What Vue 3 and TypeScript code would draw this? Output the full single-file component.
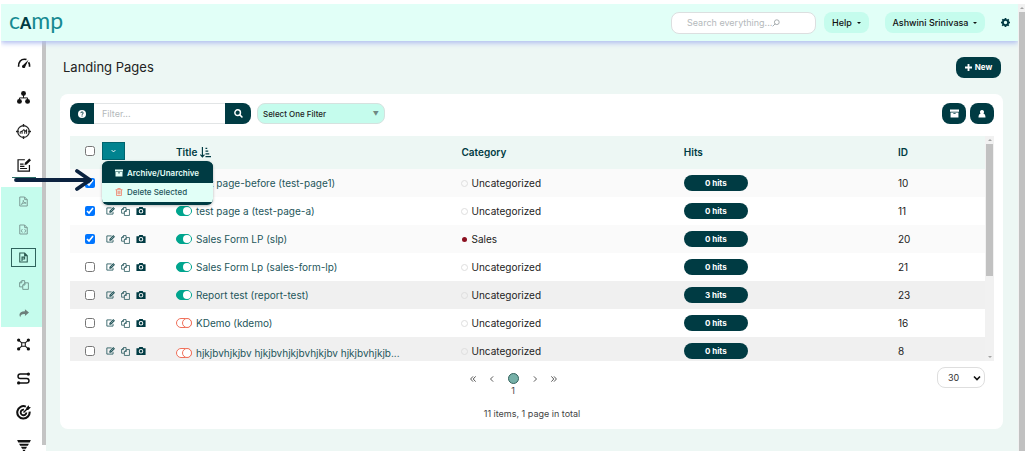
<script setup lang="ts">
import { ref } from 'vue'

interface Row {
  id: number
  title: string
  category: string
  hits: number
  enabled: boolean
  checked: boolean
}

const rows = ref<Row[]>([
  { id: 10, title: 'test page-before (test-page1)', category: 'Uncategorized', hits: 0, enabled: true, checked: true },
  { id: 11, title: 'test page a (test-page-a)', category: 'Uncategorized', hits: 0, enabled: true, checked: true },
  { id: 20, title: 'Sales Form LP (slp)', category: 'Sales', hits: 0, enabled: true, checked: true },
  { id: 21, title: 'Sales Form Lp (sales-form-lp)', category: 'Uncategorized', hits: 0, enabled: true, checked: false },
  { id: 23, title: 'Report test (report-test)', category: 'Uncategorized', hits: 3, enabled: true, checked: false },
  { id: 16, title: 'KDemo (kdemo)', category: 'Uncategorized', hits: 0, enabled: false, checked: false },
  { id: 8, title: 'hjkjbvhjkjbv hjkjbvhjkjbvhjkjbv hjkjbvhjkjb...', category: 'Uncategorized', hits: 0, enabled: false, checked: false },
])
</script>

<template>
  <div class="shell">
    <div class="app">
      <header class="topbar">
        <a class="brand" href="#" aria-label="cAmp"><span>c</span><b>A</b><span>mp</span></a>
        <label class="search">
          <input type="text" placeholder="Search everything..." aria-label="Search everything" />
          <svg viewBox="0 0 10 10" width="8" height="8"><g fill="none" stroke="#a3a9ab" stroke-width="1.200"><circle cx="6" cy="4" r="3" /><path d="M4 6 .8 9.200" /></g></svg>
        </label>
        <button class="chip help">Help <i class="caret"></i></button>
        <button class="chip user">Ashwini Srinivasa <i class="caret"></i></button>
        <button class="gear" aria-label="Settings">
          <svg viewBox="0 0 16 16" width="9" height="9"><path fill="#003b43" fill-rule="evenodd" d="M6.600 0h2.800l.4 2 1.300.6 1.800-1.200 1.900 2-1.200 1.700.6 1.300 1.800.3v2.700l-2 .4-.5 1.300 1.200 1.800-2 1.900-1.600-1.200-1.400.6-.3 1.800H6.600l-.4-2-1.300-.5-1.800 1.200-1.900-2 1.200-1.600-.6-1.400L0 9.400V6.600l2-.4.5-1.300L1.300 3.100l2-1.900L5 2.400l1.300-.5zM8 5a3 3 0 1 0 0 6 3 3 0 0 0 0-6z" /></svg>
        </button>
      </header>

      <div class="body">
        <nav class="sidebar" aria-label="Main">
          <a href="#" class="item" aria-label="Dashboard">
            <svg viewBox="0 0 16 12" width="14" height="10"><path fill="none" stroke="#111" stroke-width="2" d="M1.500 10.500C1 4 5 1.500 8.500 1.500c1 0 1.800.1 2.500.4M13.500 5c1 1.500 1.400 3.500 1.200 5.500" /><path fill="#111" d="M13.500 2 9.600 10.300a2 2 0 1 1-2.700-2z" /></svg>
          </a>
          <a href="#" class="item" aria-label="Structure">
            <svg viewBox="0 0 16 16" width="13" height="13"><g fill="#111"><circle cx="8" cy="3" r="3" /><circle cx="3" cy="12.800" r="3" /><circle cx="13" cy="12.800" r="3" /></g><path d="M8 5v3.500M3 11V8.500h10V11" fill="none" stroke="#111" stroke-width="1.200" /></svg>
          </a>
          <a href="#" class="item" aria-label="Audience">
            <svg viewBox="0 0 16 16" width="15" height="15"><g fill="none" stroke="#222"><circle cx="8" cy="8" r="6.200" stroke-width="1.300" /><path d="M8 0v3M8 13v3M0 8h3M13 8h3" stroke-width="1.500" /><path d="M4.500 10.500V8.500l2-1v3M6.500 8l1.800-2 1 1v3.500M9.300 8.500l2-2v4" stroke-width="1.100" /></g></svg>
          </a>
          <a href="#" class="item current" aria-label="Content">
            <svg viewBox="0 0 16 16" width="14" height="14"><g fill="none" stroke="#111" stroke-width="1.400"><path d="M9 2H1.200v13h13V8" /><path d="M3.500 7h4M3.500 9.500h5M3.500 12h8" /></g><path fill="#111" d="m8.500 8 .6-2.600L14 .6 16 2.500l-4.900 4.900z" /></svg>
          </a>
          <div class="submenu">
            <a href="#" class="sub" aria-label="Documents"><svg viewBox="0 0 12 14" width="9" height="11"><g fill="none" stroke="#7b9a94" stroke-width="1.300"><path d="M1 1h6.500L11 4.500V13H1zM7.500 1v3.500H11" /><path d="M3 11c2-2 3-4 2.700-5.500C6 8 7.500 9 9.500 9 7 8.800 5 9.500 3 11z" /></g></svg></a>
            <a href="#" class="sub" aria-label="Code pages"><svg viewBox="0 0 12 14" width="9" height="11"><g fill="none" stroke="#7b9a94" stroke-width="1.300"><path d="M1 1h6.500L11 4.500V13H1zM7.500 1v3.500H11M4.500 6.500 3 8.700l1.500 2.300M7.500 6.500 9 8.700 7.500 11" /></g></svg></a>
            <a href="#" class="sub" aria-label="Landing pages"><span class="boxed"><svg viewBox="0 0 12 14" width="9" height="11"><g fill="none" stroke="#2c5a50" stroke-width="1.400"><path d="M1 1h6.500L11 4.500V13H1zM7.500 1v3.500H11M4 11.500V6.500h3.500v2.500H4" /></g></svg></span></a>
            <a href="#" class="sub" aria-label="Copies"><svg viewBox="0 0 16 16" width="10" height="10"><path fill="none" stroke="#6b8d86" stroke-width="1.400" d="M6 11H1V4.500L4.500 1H9v3.500M4.500 1v3.500H1M6 8l3.500-3.500H15V15H6zM9.500 4.500V8H6" /></svg></a>
            <a href="#" class="sub" aria-label="Share"><svg viewBox="0 0 16 14" width="10" height="9"><path fill="#6d7f7b" d="M9.500 0 16 5.500 9.500 11V7.800C5 7.500 2.500 9 2 13-1 8 1.500 3.200 9.500 3.200z" /></svg></a>
          </div>
          <a href="#" class="item" aria-label="Integrations">
            <svg viewBox="0 0 16 16" width="13" height="13"><g fill="#111"><circle cx="2" cy="2.500" r="2" /><circle cx="14" cy="2.500" r="2" /><circle cx="2" cy="13.500" r="2" /><circle cx="14" cy="13.500" r="2" /></g><path fill="none" stroke="#111" stroke-width="1.300" d="m2 2.500 3.800 3.500M14 2.500 10.200 6M2 13.500 5.800 10M14 13.500 10.200 10M5.800 5.800h4.400v4.400H5.800z" /></svg>
          </a>
          <a href="#" class="item" aria-label="Journeys">
            <svg viewBox="0 0 16 16" width="13" height="13"><g fill="#111"><circle cx="14" cy="2.500" r="2" /><circle cx="2" cy="13.500" r="2" /></g><path fill="none" stroke="#111" stroke-width="1.800" d="M14 2.500H4a2.700 2.700 0 0 0 0 5.500h8a2.700 2.700 0 0 1 0 5.500H2" /></svg>
          </a>
          <a href="#" class="item" aria-label="Goals">
            <svg viewBox="0 0 16 16" width="15" height="15"><g fill="none" stroke="#111"><path stroke-width="2.200" d="M10.500 1.700A6.600 6.600 0 1 0 14.500 7" /><path stroke-width="2" d="M8.500 5A3 3 0 1 0 11 8" /><path stroke-width="1.500" d="m8 8 4-4" /></g><path fill="#111" d="m11 3 2.500-2.800.5 1.800 1.900.5L13 5.200l-2 .1z" /></svg>
          </a>
          <a href="#" class="item" aria-label="Funnels">
            <svg viewBox="0 0 16 14" width="14" height="12"><path fill="#111" d="M0 0h16l-1.300 3H1.300zM2.300 4.300h11.400l-1.200 2.500H3.500zM4.500 8h7l-1.200 2.300H5.700zM6.300 11.500h3.400L8.500 14h-1z" /></svg>
          </a>
          <div class="rail"></div>
        </nav>

        <main class="content">
          <div class="heading">
            <h1>Landing Pages</h1>
            <button class="dark new"><svg viewBox="0 0 10 10" width="7" height="7"><path stroke="#fff" stroke-width="2.600" d="M5 0v10M0 5h10" /></svg>New</button>
          </div>

          <section class="card">
            <div class="tools">
              <div class="filter">
                <button class="dark left" aria-label="Filter help"><svg viewBox="0 0 16 16" width="8" height="8"><circle cx="8" cy="8" r="8" fill="#fff" /><path d="M5.500 6.200C5.500 3.200 10.500 3.200 10.500 6c0 1.700-2.400 1.800-2.400 3.600M8.100 11v2" fill="none" stroke="#003b43" stroke-width="2" /></svg></button>
                <input type="text" placeholder="Filter..." aria-label="Filter" />
                <button class="dark right" aria-label="Search"><svg viewBox="0 0 16 16" width="9" height="9"><g fill="none" stroke="#fff" stroke-width="2.600"><circle cx="6.500" cy="6.500" r="5" /><path d="m10 10 5 5" /></g></svg></button>
              </div>
              <button class="picker" aria-haspopup="listbox">Select One Filter <span>▼</span></button>
              <button class="dark square first" aria-label="Archived"><svg viewBox="0 0 16 16" width="9" height="9"><path fill="#fff" fill-rule="evenodd" d="M0 1h16v4H0zM1 6h14v9H1zM6 7v1.500h4V7z" /></svg></button>
              <button class="dark square" aria-label="Owner"><svg viewBox="0 0 16 16" width="8" height="8"><path fill="#fff" d="M8 0a4 4 0 0 1 2.800 6.900C13.500 7.500 15 10 15 15H1c0-5 1.500-7.500 4.200-8.100A4 4 0 0 1 8 0z" /></svg></button>
            </div>

            <div class="grid">
              <div class="viewport">
                <table>
                  <colgroup>
                    <col class="c-check" /><col class="c-act" /><col class="c-title" /><col class="c-cat" /><col class="c-hits" /><col />
                  </colgroup>
                  <thead>
                    <tr>
                      <th class="check"><input type="checkbox" aria-label="Select all" /></th>
                      <th class="act">
                        <div class="bulk">
                          <button class="toggle" aria-label="Bulk actions"><svg viewBox="0 0 8 5" width="5" height="4"><path d="m1 1 3 3 3-3" fill="none" stroke="#fff" stroke-width="1.500" /></svg></button>
                          <div class="menu">
                            <button class="on"><svg viewBox="0 0 16 16" width="8" height="8"><path fill="#e6fff8" fill-rule="evenodd" d="M0 1h16v4H0zM1 6h14v9H1zM6 7v1.500h4V7z" /></svg>Archive/Unarchive</button>
                            <button><svg viewBox="0 0 14 16" width="8" height="8"><path fill="none" stroke="#f0806a" stroke-width="1.600" d="M0 3.500h14M4.500 3V1h5v2M2 3.500V15h10V3.500M5 6v6.500M7 6v6.500M9 6v6.500" /></svg>Delete Selected</button>
                          </div>
                        </div>
                      </th>
                      <th>Title
                        <svg class="sort" viewBox="0 0 16 16" width="11" height="11"><path fill="none" stroke="#003b43" stroke-width="1.700" d="M3.500 0v14M.5 11l3 3.500 3-3.500M8 2h2.500M8 6h4M8 10h5.500M8 14h8" /></svg>
                      </th>
                      <th>Category</th>
                      <th>Hits</th>
                      <th>ID</th>
                    </tr>
                  </thead>
                  <tbody>
                    <tr v-for="(row, index) in rows" :key="row.id" :class="{ soft: index === 0 || index === 2, strong: index === 4 || index === 6 }">
                      <td class="check"><input v-model="row.checked" type="checkbox" :aria-label="'Select ' + row.title" /></td>
                      <td class="act">
                        <div class="icons">
                          <button aria-label="Edit"><svg viewBox="0 0 16 14" width="9" height="8"><path fill="none" stroke="#24565b" stroke-width="1.500" d="M10 1.500H1.500v11h11V8.500" /><path fill="#24565b" d="M6 10V7l7-7 3 2.800L9 10z" /><path stroke="#fff" stroke-width=".8" d="m8.500 7.500 5-5" /></svg></button>
                          <button aria-label="Copy"><svg viewBox="0 0 16 16" width="9" height="9"><path fill="none" stroke="#24565b" stroke-width="1.400" d="M6 11H1V4.500L4.500 1H9v3.500M4.500 1v3.500H1M6 8l3.500-3.500H15V15H6zM9.500 4.500V8H6" /></svg></button>
                          <button aria-label="Preview"><svg viewBox="0 0 16 14" width="10" height="8"><path fill="#003b43" fill-rule="evenodd" d="M5 0h6l1 2h4v12H0V2h4zm3 3.500a4 4 0 1 0 0 8 4 4 0 0 0 0-8zM8 5.200a2.300 2.300 0 1 1 0 4.600 2.300 2.300 0 0 1 0-4.600z" /></svg></button>
                        </div>
                      </td>
                      <td>
                        <div class="name" :class="{ low: index === 6 }">
                          <button class="switch" :class="{ off: !row.enabled }" role="switch" :aria-checked="row.enabled" aria-label="Published" @click="row.enabled = !row.enabled"><i></i></button>
                          <a href="#">{{ row.title }}</a>
                        </div>
                      </td>
                      <td><div class="cat"><i :class="{ red: row.category === 'Sales' }"></i>{{ row.category }}</div></td>
                      <td><span class="hits">{{ row.hits }} hits</span></td>
                      <td>{{ row.id }}</td>
                    </tr>
                  </tbody>
                </table>
              </div>
              <div class="scroll inner"><i class="up"></i><b></b><i class="down"></i></div>
            </div>

            <footer class="foot">
              <div class="pager">
                <div class="pages">
                  <button aria-label="First"><svg viewBox="0 0 8 8" width="6" height="6"><path d="M4 .5.800 4 4 7.500M7.500.5 4.300 4l3.200 3.500" /></svg></button>
                  <button aria-label="Previous"><svg viewBox="0 0 8 8" width="6" height="6"><path d="M5.500.5 2 4l3.500 3.500" /></svg></button>
                  <button class="page"><i></i>1</button>
                  <button aria-label="Next"><svg viewBox="0 0 8 8" width="6" height="6"><path d="M2.500.5 6 4 2.500 7.500" /></svg></button>
                  <button aria-label="Last"><svg viewBox="0 0 8 8" width="6" height="6"><path d="M.5.5 3.700 4 .5 7.500M4 .5 7.200 4 4 7.500" /></svg></button>
                </div>
                <p>11 items, 1 page in total</p>
              </div>
              <div class="size">
                <select aria-label="Items per page"><option>30</option></select>
                <svg viewBox="0 0 8 6" width="8" height="6"><path d="m1 1.500 3 3 3-3" fill="none" stroke="#111" stroke-width="1.600" /></svg>
              </div>
            </footer>
          </section>
        </main>

        <svg class="pointer" viewBox="0 0 80 24" width="80" height="24"><path d="M4 12h73M65 3l13 9-13 9" fill="none" stroke="#0c2340" stroke-width="3.800" stroke-linecap="round" stroke-linejoin="round" /></svg>
      </div>
    </div>
    <div class="scroll outer"><i class="up"></i><b></b></div>
  </div>
</template>

<style>
body { background: #fff; }
</style>

<style scoped>
* { box-sizing: border-box; }
.shell {
  display: flex;
  height: 100vh;
  padding: 4px 2px 6px 1px;
  overflow: hidden;
  font-family: Inter, "Liberation Sans", sans-serif;
  font-size: 10px;
  color: #222;
}
button, input, select { font: inherit; color: inherit; margin: 0; }
button { padding: 0; border: 0; background: none; display: inline-flex; align-items: center; justify-content: center; }
a { color: inherit; text-decoration: none; }
svg { display: block; flex: none; }

.app { flex: 1; min-width: 0; display: flex; flex-direction: column; }
.topbar {
  position: relative;
  z-index: 2;
  flex: none;
  display: flex;
  align-items: center;
  height: 37px;
  padding: 0 8px;
  background: #e1fff7;
  box-shadow: 0 2px 5px #aebcf0;
  clip-path: inset(0 0 -8px 0);
}
.brand { margin-right: auto; padding-bottom: 3px; font-family: Lato, sans-serif; font-size: 23px; line-height: 26px; color: #168a92; }
.brand b { font-size: 16px; font-weight: 900; color: #003b43; }
.search { position: relative; }
.search svg { position: absolute; left: 101px; top: 7px; }
.search input {
  display: block;
  width: 145px;
  height: 22px;
  padding: 0 15px;
  border: 1px solid #dcdfe0;
  border-radius: 8px;
  background: #fff;
  font-size: 9px;
  outline: 0;
}
input::placeholder { color: #b4b9bb; opacity: 1; }
.chip { height: 21px; border-radius: 8px; background: #c5fced; font-size: 9px; font-weight: 500; color: #111; gap: 5px; }
.help { width: 45px; margin-left: 8px; }
.user { width: 100px; margin-left: 16px; }
.caret { border: 2px solid transparent; border-top-color: #111; border-bottom: 0; }
.gear { margin-left: 16px; }

.body { position: relative; flex: 1; min-height: 0; display: flex; }
.sidebar { position: relative; flex: none; width: 45px; padding-top: 5px; overflow: hidden; background: #fff; }
.item { display: flex; align-items: center; justify-content: center; height: 34px; }
.current { position: relative; }
.current::after { content: ""; position: absolute; left: 11px; bottom: 4px; width: 24px; height: 1px; background: #2b6d66; }
.submenu { margin-top: 5px; background: #c5fced; }
.sub { display: flex; align-items: center; justify-content: center; height: 28px; }
.boxed { display: flex; align-items: center; justify-content: center; width: 25px; height: 19px; border: 1px solid #2f625c; }
.rail { position: absolute; top: 0; right: 0; bottom: 6px; width: 4px; background: #c4c4c4; }

.content { flex: 1; min-width: 0; padding: 15px 15px 0 14px; background: #edf7f4; }
.heading { display: flex; align-items: center; justify-content: space-between; height: 22px; padding: 0 2px 0 3px; }
h1 { margin: 0; font-size: 13px; font-weight: 400; color: #222; }
.dark { background: #003b43; color: #fff; border-radius: 8px; height: 21px; }
.new { width: 45px; gap: 3px; font-size: 8px; font-weight: 700; }

.card { margin-top: 16px; padding: 9px 9px 9px 10px; border-radius: 8px; background: #fff; }
.tools { display: flex; align-items: center; height: 21px; }
.filter { display: flex; height: 21px; }
.filter input { width: 131px; border: 1px solid #e2e5e6; border-width: 1px 0; padding: 0 8px; font-size: 9px; background: #fff; outline: 0; }
.left { width: 24px; border-radius: 8px 0 0 8px; }
.right { width: 26px; border-radius: 0 8px 8px 0; }
.picker { width: 128px; height: 21px; margin-left: 6px; padding: 0 5px; justify-content: space-between; border: 1px solid #d5e2df; border-radius: 8px; background: #c5fced; font-size: 8px; font-weight: 500; }
.picker span { font-size: 6px; color: #6f8883; }
.square { width: 24px; margin-left: 4px; }
.first { margin-left: auto; }

.grid { display: flex; margin-top: 12px; height: 225px; }
.viewport { flex: 1; min-width: 0; overflow: hidden; }
table { width: 100%; table-layout: fixed; border-collapse: collapse; }
.c-check { width: 32px; }
.c-act { width: 66px; }
.c-title { width: 31.2%; }
.c-cat { width: 24.3%; }
.c-hits { width: 23.4%; }
th { height: 33px; padding: 0 8px 2px; text-align: left; font-weight: 600; color: #003b43; background: #edf7f4; }
td { height: 28px; padding: 0 8px; white-space: nowrap; }
.soft { background: #fafafa; }
.strong { background: #f0f0f0; }
.check { padding: 0 0 0 15px; }
th.check { padding-bottom: 4px; }
.check input { display: block; width: 10px; height: 10px; accent-color: #0075ff; }
.act { padding: 0 0 0 3px; }
.sort { display: inline-block; vertical-align: -2px; }
.bulk { position: relative; margin-left: -3px; }
.toggle { width: 23px; height: 18px; background: #00838f; border: 1px solid #00646e; margin-top: -4px; display: flex; }
.menu { position: absolute; z-index: 3; left: 0; top: 19px; width: 111px; padding: 2px 0 3px; border-radius: 6px; overflow: hidden; background: #003b43; box-shadow: 0 1px 3px #0004; }
.menu button { display: flex; justify-content: flex-start; width: 100%; height: 19px; padding-left: 13px; gap: 4px; font-size: 8px; font-weight: 500; color: #24565b; background: #e1fff7; }
.menu .on { height: 20px; color: #e6fff8; background: #003b43; font-weight: 600; }
.icons { display: flex; align-items: center; gap: 6px; padding-left: 1px; }
.name { display: flex; align-items: center; gap: 4px; }
.name a { color: #24565b; }
.low { padding-top: 4px; }
.switch { flex: none; width: 16px; height: 10px; border: 1px solid #00a58e; border-radius: 5px; background: #00a58e; justify-content: flex-end; }
.switch i { width: 8px; height: 8px; border-radius: 4px; background: #fff; }
.off { border-color: #f0705a; background: #fff; }
.off i { width: 10px; height: 10px; margin-right: -1px; border: 1px solid #f0705a; border-radius: 5px; }
.cat { display: flex; align-items: center; gap: 3px; }
.cat i { width: 7px; height: 7px; border: 1px solid #dedede; border-radius: 4px; }
.cat .red { width: 5px; height: 5px; margin: 0 1px; border: 0; background: #8b1020; }
.hits { display: block; width: 64px; height: 16px; border-radius: 8px; background: #003b43; color: #fff; font-size: 8px; line-height: 16px; font-weight: 700; text-align: center; }

.scroll { flex: none; display: flex; flex-direction: column; align-items: center; background: #f1f1f1; }
.inner { width: 9px; }
.inner b { width: 7px; height: 132px; background: #c1c1c1; }
.inner .down { margin-top: auto; }
.outer { width: 7px; }
.outer b { width: 6px; flex: 1; background: #c1c1c1; }
.up, .down { height: 8px; display: flex; align-items: center; }
.up::after { content: ""; border: 2px solid transparent; border-top: 0; border-bottom-color: #a3a3a3; }
.down::after { content: ""; border: 2px solid transparent; border-bottom: 0; border-top-color: #a3a3a3; }

.foot { display: grid; grid-template-columns: 1fr auto 1fr; padding-top: 6px; height: 59px; }
.pager { grid-column: 2; display: flex; flex-direction: column; align-items: center; font-size: 9px; color: #444; }
.pages { display: flex; align-items: flex-start; gap: 13px; padding-top: 6px; margin-right: 38px; }
.pages button { height: 12px; }
.pages svg path { fill: none; stroke: #444; stroke-width: 1.2; }
.pages .page { flex-direction: column; justify-content: flex-start; height: 24px; gap: 1px; width: 11px; }
.page i { flex: none; width: 11px; height: 11px; border: 1px solid #33625d; border-radius: 6px; background: #76b0a8; }
.pager p { margin: 11px 0 0; line-height: 12px; }
.size { position: relative; justify-self: end; margin-right: 9px; height: 21px; }
.size select { appearance: none; display: block; width: 48px; height: 21px; padding: 0 10px; border: 1px solid #dedede; border-radius: 8px; background: #fff; font-size: 9px; color: #333; }
.size svg { position: absolute; right: 4px; top: 8px; pointer-events: none; }

.pointer { position: absolute; z-index: 5; left: 11px; top: 127px; }
</style>
